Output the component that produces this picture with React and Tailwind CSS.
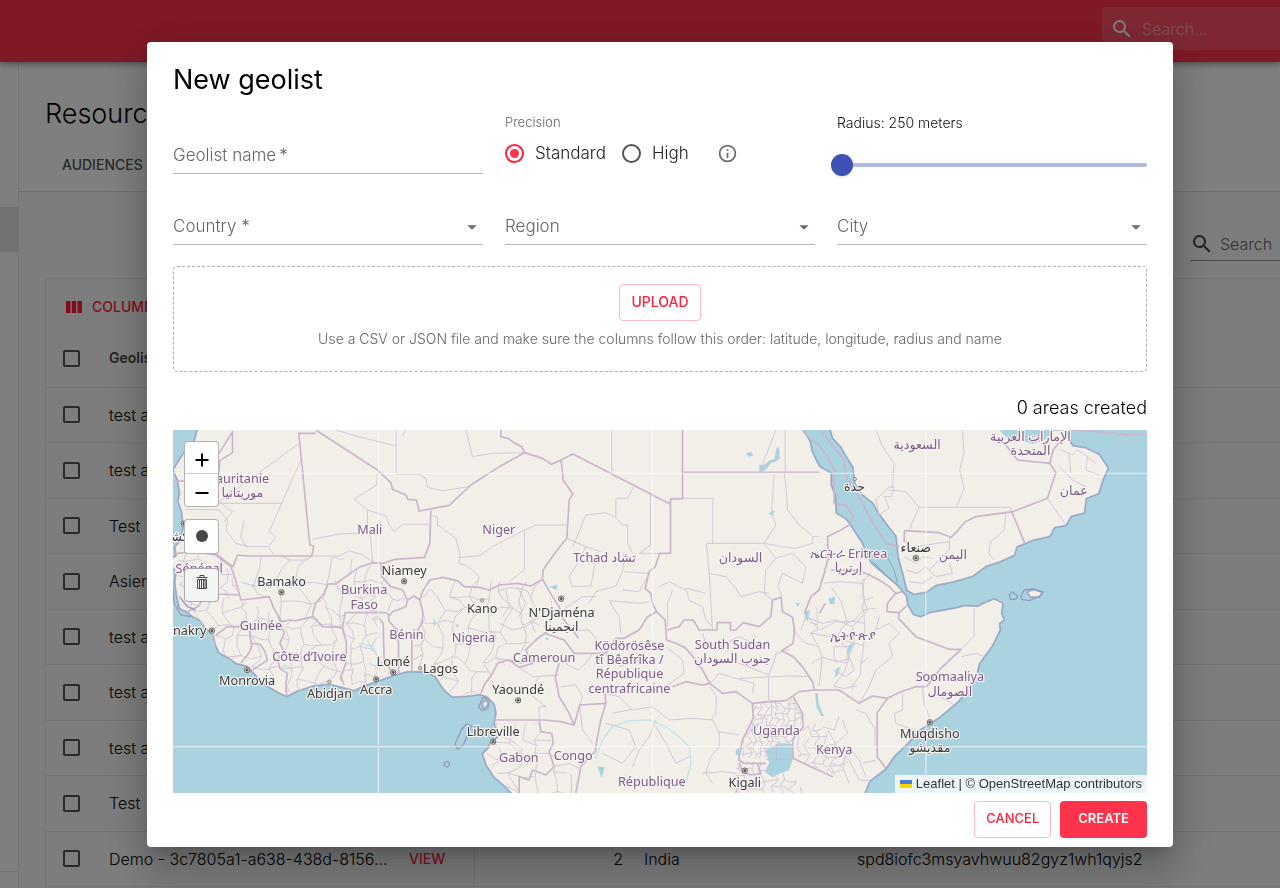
import React, { useState } from "react";

const ROWS = [
  { name: "test area" },
  { name: "test area" },
  { name: "Test" },
  { name: "Asier" },
  { name: "test area" },
  { name: "test area" },
  { name: "test area" },
  { name: "Test" },
  {
    name: "Demo - 3c7805a1-a638-438d-8156...",
    view: true,
    areas: 2,
    country: "India",
    hash: "spd8iofc3msyavhwuu82gyz1wh1qyjs2",
  },
];

// Map geometry, in tile units (3 per screen pixel)
const LAND = [
  // Africa
  "M78 -20L75 0L66 35L40 62L20 92L3 120L16 150L22 190L18 215L28 245L34 290L26 330L8 352L12 378L0 385V410L12 425L8 460L14 500L22 535L45 545L60 558L85 572L98 592L122 612L128 640L140 668L170 684L192 700L225 708L255 740L280 765L320 788L343 798L372 783L420 767L470 761L505 770L545 781L575 766L610 755L660 736L705 724L760 724L790 740L805 765L822 785L840 800L880 798L922 793L945 800L966 822L972 850L966 880L983 918L955 938L948 955L931 972L942 1005L965 1040L995 1066L1018 1089L1030 1110H2066L2076 1089L2092 1052L2140 1015L2165 978L2205 940L2240 900L2300 862L2352 818L2388 780L2412 735L2420 700L2460 645L2482 600L2480 580L2494 570L2486 550L2490 520L2465 508L2440 518L2415 530L2378 528L2345 536L2310 542L2270 550L2245 562L2222 555L2205 525L2200 498L2175 468L2130 430L2095 400L2080 370L2068 340L2036 290L2020 268L1990 250L1988 200L1975 165L1975 130L1940 110L1918 65L1912 35L1890 0L1885 -20Z",
  // Arabia
  "M1970 -20L1974 0L1982 25L2006 50L2020 75L2042 110L2048 160L2072 195L2102 218L2120 250L2150 290L2172 318L2178 380L2192 430L2204 480L2225 492L2262 485L2290 465L2340 455L2400 438L2440 408L2480 395L2525 375L2532 350L2580 330L2632 318L2645 292L2680 285L2695 258L2735 248L2740 205L2778 190L2790 150L2806 115L2780 75L2740 55L2700 48L2684 20L2680 0V-20Z",
  // Socotra, Bioko
  "M2566 486L2586 480L2608 488L2600 500L2574 500Z",
  "M930 820L942 812L946 822L934 835Z",
];

const WATER = [
  "M2480 0L2500 20L2510 40L2545 30L2580 42L2620 28L2646 0Z",
  "M1780 960L1820 940L1860 942L1862 985L1850 1020L1822 1030L1800 1042L1776 1025L1790 1000Z",
  "M1928 790L1936 790L1938 820L1950 850L1956 858L1946 858L1932 830Z",
  "M1735 900L1762 875L1750 900L1740 912Z",
  "M1720 70L1738 66L1742 76L1728 80Z",
  "M1760 104L1774 106L1790 92L1806 86L1812 55L1820 52L1822 85L1808 96L1796 98L1782 116L1762 132Z",
  "M1690 960L1702 952L1698 975L1690 975Z",
  "M1275 1010L1296 1012L1288 1045L1282 1030Z",
  "M1895 545L1912 540L1905 575L1898 565Z",
  "M1870 518L1882 520L1876 532Z",
  "M1968 505L1988 500L1985 522L1972 522Z",
  "M1992 715L2004 712L1994 738L1986 742Z",
  "M2030 645L2044 640L2038 652L2028 672L2022 668Z",
  "M1130 470L1155 464L1152 480Z",
  "M1788 250L1808 240L1800 256Z",
  "M1118 620L1130 628L1122 632Z",
  "M236 465L244 462L242 476Z",
  "M784 560L790 580L784 590Z",
  "M848 585L858 582L856 595Z",
];

const RIVERS = [
  "M1269 985L1290 930L1320 890L1370 872L1430 870L1480 890L1520 920L1550 950L1556 1000L1540 1060",
  "M560 640L600 650L622 690L608 720",
  "M585 632L605 665M590 700L618 712",
  "M330 705L352 712",
];

const BORDERS = [
  "M0 153H35M140 70L180 5V68L142 92L137 160",
  "M430 0L615 120L655 158L660 178L700 195L706 208L732 210L740 243L830 226L895 165L981 110L1056 68L1048 50L1025 38L1006 25L985 20V0",
  "M430 10H379L412 345L424 348L418 378H225L195 375L182 410L160 395L130 370",
  "M775 240L772 340L756 382L668 388L632 400L600 398L560 412L520 440L490 462H466L455 490L430 520L422 545",
  "M0 372L60 365L130 375L175 410L188 445L200 490L205 510L250 505L290 500L302 530L318 560L330 575L350 570L370 572L400 565L420 560L422 545",
  "M35 480L90 470L135 492L200 495",
  "M45 545L75 530L100 500L98 470",
  "M130 615L165 590L200 590L232 600L235 640L262 642L275 660L285 690L270 700L240 720",
  "M205 700L232 665L240 640",
  "M318 560L335 610L322 640L335 665L315 690L322 715L345 730L340 760L343 798",
  "M422 560L450 590L510 592L522 640L520 700L505 740L515 765",
  "M510 592L518 548H640L650 555",
  "M625 400L628 440L655 470L690 480L705 510L700 530L660 545L648 560L650 575L675 600L678 640V730",
  "M615 560L632 580L635 690L655 720",
  "M705 510L725 498L742 510L752 550L748 580L718 630V722",
  "M742 510L750 485L772 450L810 442L855 452L875 470L920 472L950 480L981 465L1035 460L1075 468L1110 448L1112 420L1150 365L1183 325L1190 210L1201 192L1172 150L1166 90L1137 103L1110 85L1056 68",
  "M1166 90L1201 72L1493 222",
  "M1530 0V207H1494V370H1462L1448 410L1430 425L1418 475L1435 490L1440 520L1452 545",
  "M1530 127H1941",
  "M925 790L935 765L960 730L975 700L1005 690L1050 700",
  "M1110 448L1140 500L1160 530L1170 565L1200 600L1218 625",
  "M1130 600L1090 630L1060 660L1080 700L1040 712L1010 690",
  "M1115 610L1175 630L1205 670H1300L1330 625H1355L1400 600L1425 560L1452 545L1478 570L1482 630L1510 640L1540 655L1570 690L1590 720L1612 760",
  "M1482 600L1520 590L1535 570H1562L1580 600L1634 600V578H1674V600H1690L1712 578L1760 590L1795 560L1800 510L1826 502L1830 545L1860 562L1866 600L1862 640L1828 662L1862 680L1890 710L1920 755L1926 780",
  "M1160 700L1148 740L1160 800L1190 850L1205 885L1222 825L1300 820",
  "M966 870H1115L1165 875L1205 885",
  "M1298 790L1300 820L1285 870L1275 920L1268 965L1225 1010L1210 1089",
  "M1100 870L1105 905L1138 910L1142 940L1130 965L1145 1010L1120 1035L1080 1020L1070 1050L1040 1040V1089",
  "M1500 770L1540 755L1590 765L1612 760L1650 790L1690 785L1740 820L1790 815L1840 812L1880 785L1926 780H2000L2060 820L2100 798L2145 805L2185 785L2230 770H2262",
  "M1862 800L1890 850L1892 890L1860 930L1862 985L1925 1015L1981 1040",
  "M1740 820L1742 865L1710 930L1698 990L1715 1000H1780",
  "M1700 1000L1710 1025L1735 1035L1765 1030L1755 1000M1700 1040L1690 1089",
  "M1941 0L1980 45L2015 90L2022 145L2060 200L2090 260L2140 340L2180 350",
  "M1890 0L1905 20L1935 40L1965 80L1985 120L1985 220L2020 225L2042 260L2030 285",
  "M1941 550L1958 520M1896 550L1915 500L1940 480L1955 430L1968 380L1965 320L2005 300L2030 285",
  "M1975 420H2040L2080 430L2120 450L2150 470L2170 490L2190 485",
  "M2170 490L2145 520L2143 545L2180 548L2205 525M2180 548L2178 565L2230 620L2330 658H2366",
  "M2366 658L2305 715L2262 770",
  "M2145 805L2114 848V980L2140 1015",
  "M2195 335L2196 302L2300 308L2335 322L2350 308L2378 275L2410 260L2520 245L2625 205L2650 128L2632 100L2535 90L2500 45",
  "M2517 243L2556 338M2632 100L2642 60L2665 30",
  "M2640 0L2725 0L2865 14H2925",
];

const DISTRICTS = [
  "M380 40L140 215L180 245L155 275M385 90L290 305L310 320L290 350M40 238L140 240L165 270L160 300L190 340L230 350",
  "M140 220H325M215 272L205 320L220 350L285 350L305 375M35 300L80 320L120 350",
  "M490 0L540 15L670 48M671 0V132H735L760 145L765 172L810 182L890 170",
  "M615 130L612 165L545 208L585 240L640 258L648 280L665 305L690 283H770",
  "M418 328L500 312L590 308L595 330L600 395M585 240V308M424 378H500L530 362L570 375L600 395",
  "M780 258L795 262V285L850 325L862 370L860 400L888 410L920 440L910 470M862 382L920 378L960 350L1056 300V420L1010 455",
  "M690 18L700 0M880 0L900 80L960 70L1056 68M1056 300L1090 285H1183",
  "M1318 0V128M1385 168L1365 205H1330V262M1201 350L1240 255L1300 248L1330 262L1350 285H1366V340L1380 368M1434 190V345L1400 370H1494",
  "M1183 325L1240 350L1285 365M1240 350L1215 400L1190 440L1200 470L1255 468L1270 390M1352 370V420L1330 468L1270 485L1250 520",
  "M1350 480L1400 485L1430 430L1355 425M1310 512L1400 520L1430 515M1310 512L1340 560L1345 610",
  "M1494 205H1621V340M1838 0V127M1810 0L1760 130M1805 130L1797 250L1810 285L1775 340H1602L1610 430L1620 600",
  "M1835 130L1840 165L1845 240L1880 285L1922 320L1920 340L1870 355L1830 350L1775 340M1922 320H1941",
  "M1610 430L1660 440L1690 475L1705 500L1760 485L1790 490M1460 470L1490 455L1540 480L1545 475L1600 490M1540 475L1550 510L1590 530L1600 570L1620 590M1500 480L1485 520V590",
  "M1775 340L1810 385L1780 420L1775 490L1800 510M1810 385L1860 370L1900 410L1890 460L1830 430L1815 470L1830 502",
  "M1590 610L1600 640L1640 650L1700 620L1740 640M1650 690L1700 700L1790 735L1812 670L1850 660M1700 745L1850 738L1915 740M1788 740V810",
  "M1612 760L1640 730L1690 745L1745 760L1740 790M1860 600L1900 640L1941 650M1895 550L1941 600L1990 575H2050L2075 580",
  "M1300 790L1340 800L1380 840L1440 830L1490 870L1560 865L1620 870M1340 710L1400 690M1480 650L1530 690L1535 730L1480 770",
  "M1320 850L1380 838M1300 880L1370 900L1390 950L1350 1000L1290 970M1450 870L1430 920L1400 960L1380 1010M1450 890L1480 940L1510 1000L1550 980",
  "M1612 770L1632 800L1630 850L1618 865L1640 910L1640 950L1615 980L1600 1030L1620 1060M1640 905L1700 915M1590 1030L1650 1025L1690 1030",
  "M1178 700L1215 720L1240 700L1260 670M1165 770L1210 765L1230 800L1222 825M1205 600L1250 600L1280 640M1200 560L1170 540L1230 500H1270",
  "M981 580L1020 600L1060 590L1100 560M1000 480L1010 530L990 560M1035 470L1060 520L1040 560M1040 712L1080 740L1160 735M1100 740L1070 790L1120 830H1100V870",
  "M990 920L1030 940L1050 960L1020 990L985 985M1060 880L1050 930L1100 950M1222 830L1230 900L1260 940M1145 1010L1190 1000L1220 1015",
  "M2150 170L2110 210L2120 255L2150 235L2135 200H2155L2165 172ZM2150 180L2200 185L2240 232L2220 275L2210 300",
  "M2110 0L2130 50L2165 100L2160 172M2370 0L2374 70L2362 120L2368 150L2375 175L2350 235M2240 232H2515V245",
  "M2625 205L2680 285M2500 250L2495 300L2455 335L2448 370L2465 390M2332 320L2330 360L2290 400L2270 420",
  "M2665 60L2700 75L2715 60L2745 80L2740 120L2780 135M2695 130L2690 75M2745 80L2770 100M2660 110L2700 150L2740 170",
  "M2195 335L2220 355L2260 345L2330 335M2195 380L2230 400L2250 380L2280 385M2200 420L2235 430L2260 410L2290 440L2340 430L2330 400M2210 455L2250 460L2280 440",
  "M2405 535V610L2408 615L2366 658M2366 680L2412 670L2435 680M2305 800L2345 825M2250 770L2255 820L2270 860M2190 790V840L2165 850L2170 880L2240 905",
  "M2095 430L2075 450L2070 500L2085 540L2040 590L1990 570L1950 580L1900 560L1885 600M2040 590L2045 640L2030 680L2045 720L2020 740L1980 720",
  "M2110 600L2150 580L2180 610L2150 640L2160 680L2110 720L2090 770L2060 820M2120 560L2110 600M2070 460L2000 455L1955 460",
  "M1985 650L2030 650L2020 700L1985 690ZM2050 840L2080 850L2108 900V950M2000 860L1985 900L1950 890M1985 960L2030 990L2060 1050L2092 1052",
  "M1965 900L1990 940L2025 910L2010 870M2030 950L2060 990L2080 1040M1975 1000L2010 1010L2030 1060M2110 990L2070 1000",
];

// Regions that are split in many small units: clip outline, cell step and jitter seed
const MESHES = [
  { id: "uganda", clip: "M1740 820L1790 815L1862 805L1892 860L1860 940L1850 985H1710L1712 930L1745 865Z", box: [1700, 800, 1900, 1000], step: 17, seed: 3 },
  { id: "kenya", clip: "M1862 900L1930 880L1990 940L2030 990L2000 1040L1900 1000L1862 960Z", box: [1860, 870, 2040, 1050], step: 26, seed: 9 },
  { id: "rwanda", clip: "M1690 985L1770 1000L1860 1040L1900 1089H1690Z", box: [1680, 980, 1910, 1089], step: 32, seed: 5 },
  { id: "mali", clip: "M205 380L480 380L600 398L470 465L422 560L318 570L290 500H205Z", box: [200, 380, 610, 580], step: 72, seed: 21 },
  { id: "guinea", clip: "M45 545L100 500L205 510L318 560L335 610L322 700L343 790L225 705L140 668Z", box: [40, 490, 350, 800], step: 44, seed: 13 },
  { id: "ivory", clip: "M340 575L420 560L510 592L520 700L505 765L343 790L322 690Z", box: [320, 550, 530, 800], step: 42, seed: 17 },
  { id: "ghana", clip: "M518 548H615L635 690L655 730L545 775L510 740Z", box: [510, 540, 660, 790], step: 38, seed: 31 },
  { id: "burkina", clip: "M430 540L466 465L560 412L625 400L700 510L640 548H518L510 592L450 590Z", box: [420, 400, 710, 600], step: 48, seed: 41 },
  { id: "nigeria", clip: "M725 600L752 550L750 485L855 452L1110 455L1140 520L1060 660L960 730L925 790L840 795L780 730L720 720Z", box: [710, 440, 1150, 800], step: 50, seed: 8 },
  { id: "senegal", clip: "M20 340L130 370L188 445L200 495L50 540L15 500Z", box: [10, 330, 210, 550], step: 48, seed: 27 },
  { id: "gabon", clip: "M960 880H1100L1140 940L1145 1010L1210 1040V1089H1020L940 990Z", box: [940, 870, 1220, 1089], step: 54, seed: 45 },
  { id: "ethiopia", clip: "M1900 600L1960 480L2090 440L2120 600L2050 780L1930 770Z", box: [1890, 430, 2130, 790], step: 66, seed: 52 },
];

const meshPath = ([x0, y0, x1, y1], step, seed) => {
  let s = seed * 7919;
  const rand = () => {
    s = (s * 16807) % 2147483647;
    return s / 2147483647 - 0.5;
  };
  const cols = Math.ceil((x1 - x0) / step) + 1;
  const rows = Math.ceil((y1 - y0) / step) + 1;
  const pts = [];
  for (let r = 0; r <= rows; r++) {
    for (let c = 0; c <= cols; c++) {
      const shift = r % 2 ? step / 2 : 0;
      pts.push([x0 + c * step - shift + rand() * step * 0.7, y0 + r * step + rand() * step * 0.7]);
    }
  }
  const line = (a, b) => {
    const mx = Math.round((a[0] + b[0]) / 2 + rand() * step * 0.4);
    const my = Math.round((a[1] + b[1]) / 2 + rand() * step * 0.4);
    return `M${Math.round(a[0])} ${Math.round(a[1])}L${mx} ${my}L${Math.round(b[0])} ${Math.round(b[1])}`;
  };
  let d = "";
  for (let r = 0; r < rows; r++) {
    for (let c = 0; c < cols; c++) {
      const i = r * (cols + 1) + c;
      d += line(pts[i], pts[i + cols + 1]);
      if ((r + c) % 3) d += line(pts[i], pts[i + 1]);
    }
  }
  return d;
};

// [x, y of the first line, lines]
const COUNTRIES = [
  [210, 158, ["auritanie", "موريتانيا"]],
  [592, 312, ["Mali"]],
  [80, 430, ["Sénégal"]],
  [575, 493, ["Burkina", "Faso"]],
  [265, 601, ["Guinée"]],
  [702, 627, ["Bénin"]],
  [903, 637, ["Nigeria"]],
  [411, 693, ["Côte d’Ivoire"]],
  [979, 312, ["Niger"]],
  [1296, 396, ["Tchad تشاد"]],
  [1704, 396, ["السودان"]],
  [1115, 697, ["Cameroun"]],
  [1371, 659, ["Ködörösêse", "tî Bêafrîka /", "République", "centrafricaine"]],
  [1680, 656, ["South Sudan", "جنوب السودان"]],
  [1812, 915, ["Uganda"]],
  [1039, 997, ["Gabon"]],
  [1202, 991, ["Congo"]],
  [1438, 1069, ["République"]],
  [2028, 384, ["ኤርትራ Eritrea", "إرتريا"]],
  [2041, 630, ["ኢትዮጵያ"]],
  [1985, 971, ["Kenya"]],
  [2332, 754, ["Soomaaliya", "الصومال"]],
  [2234, 56, ["السعودية"]],
  [2574, 33, ["الإمارات العربية", "المتحدة"]],
  [2704, 194, ["عمان"]],
  [2341, 388, ["اليمن"]],
];

// [label x, label y, lines, marker x, marker y, capital]
const CITIES = [
  [327, 467, ["Bamako"], 327, 487, true],
  [695, 434, ["Niamey"], 695, 454, true],
  [929, 548, ["Kano"], 929, 511, false],
  [40, 616, ["onakry"], 118, 602, true],
  [224, 764, ["Monrovia"], 224, 720, true],
  [471, 804, ["Abidjan"], 471, 756, false],
  [611, 793, ["Accra"], 611, 748, true],
  [662, 708, ["Lomé"], 662, 727, true],
  [804, 728, ["Lagos"], 743, 714, false],
  [1037, 791, ["Yaoundé"], 1037, 811, true],
  [962, 918, ["Libreville"], 962, 935, true],
  [1167, 560, ["N'Djaména", "انجمينا"], 1166, 506, true],
  [1717, 1070, ["Kigali"], 1717, 1022, true],
  [2046, 182, ["جدة"], 2047, 147, false],
  [2230, 366, ["صنعاء"], 2230, 384, true],
  [2272, 924, ["Muqdisho", "مقديشو"], 2272, 877, true],
  [15, 332, ["نواكشوط"], 34, 281, true],
];

const MapLabel = ({ x, y, lines, fill }) => (
  <text y={y} fill={fill} stroke="#f7f4f4" strokeWidth="7" textAnchor="middle" className="[paint-order:stroke]">
    {lines.map((line, i) => (
      <tspan key={line} x={x} dy={i ? 43 : 0}>
        {line}
      </tspan>
    ))}
  </text>
);

const AfricaMap = () => (
  <svg
    viewBox="0 0 2925 1089"
    preserveAspectRatio="xMidYMid slice"
    className="block h-full w-full bg-[#aad3df] font-['Noto_Sans','DejaVu_Sans',sans-serif]"
    strokeLinejoin="round"
    role="img"
    aria-label="Map"
  >
    <defs>
      {MESHES.map((mesh) => (
        <clipPath key={mesh.id} id={mesh.id}>
          <path d={mesh.clip} />
        </clipPath>
      ))}
    </defs>
    <g fill="#f2efe9">
      {LAND.map((d) => (
        <path key={d} d={d} stroke="#93a9c8" strokeWidth="8" />
      ))}
      {LAND.map((d) => (
        <path key={d} d={d} stroke="#a3a0c4" strokeWidth="2" />
      ))}
    </g>
    <g fill="none" stroke="#d3c8d9" strokeWidth="3">
      {DISTRICTS.map((d) => (
        <path key={d} d={d} />
      ))}
      {MESHES.map((mesh) => (
        <path key={mesh.id} d={meshPath(mesh.box, mesh.step, mesh.seed)} clipPath={`url(#${mesh.id})`} />
      ))}
    </g>
    <g fill="#aad3df">
      {WATER.map((d) => (
        <path key={d} d={d} />
      ))}
    </g>
    <g fill="none" stroke="#c3e2ea" strokeWidth="4">
      {RIVERS.map((d) => (
        <path key={d} d={d} />
      ))}
    </g>
    <g fill="none" stroke="#cbb5cc" strokeWidth="5">
      {BORDERS.map((d) => (
        <path key={d} d={d} />
      ))}
      <path d="M1780 988H1860M1812 940V988" strokeWidth="2" />
    </g>
    <g fill="none" stroke="#929cc0" strokeWidth="4">
      <path d="M882 882L898 888L872 945L856 958L848 942L866 900Z" />
      <path d="M932 802L950 808L946 835L930 842L918 832Z" />
      <circle cx="823" cy="1003" r="8" />
      <path d="M2510 495L2520 486L2536 498L2530 508L2514 508ZM2545 500L2555 480L2580 477L2612 486L2600 500L2570 512L2548 508Z" />
      <path d="M0 455L5 520L25 555L55 560M20 500L45 530L70 540" />
      <path d="M2140 375L2165 420L2175 460M2100 395L2145 440L2180 470" strokeWidth="3" />
    </g>
    <g stroke="#ffffff" strokeOpacity="0.55" strokeWidth="4">
      <path d="M0 130H2925M0 950H2925M618 0V1089M1440 0V1089M2260 0V1089" />
    </g>
    <g fontSize="38">
      {CITIES.map(([x, y, lines, mx, my, capital]) => (
        <g key={lines[0]}>
          <circle cx={mx} cy={my} r={capital ? 8 : 5} fill="#d9d6cc" stroke={capital ? "#66665e" : "#8f8f88"} strokeWidth="3" />
          {capital && <circle cx={mx} cy={my} r="4" fill="#55554d" />}
          <MapLabel x={x} y={y} lines={lines} fill="#383838" />
        </g>
      ))}
      {COUNTRIES.map(([x, y, lines]) => (
        <MapLabel key={`${x}-${y}`} x={x} y={y} lines={lines} fill="#7d5b86" />
      ))}
    </g>
  </svg>
);

const SearchIcon = ({ className }) => (
  <svg viewBox="0 0 24 24" fill="currentColor" className={className} aria-hidden="true">
    <path d="M15.5 14h-.79l-.28-.27A6.47 6.47 0 0 0 16 9.5 6.5 6.5 0 1 0 9.5 16c1.61 0 3.09-.59 4.23-1.57l.27.28v.79l5 4.99L20.49 19l-4.99-5zm-6 0C7.01 14 5 11.99 5 9.5S7.01 5 9.5 5 14 7.01 14 9.5 11.99 14 9.5 14z" />
  </svg>
);

const SelectField = ({ label, required }) => (
  <div className="relative h-[35px] border-b border-[#949494]/70">
    <select
      aria-label={label}
      required={required}
      className="h-full w-full appearance-none bg-transparent text-[17px] font-light text-[#666] outline-none"
    >
      <option>{required ? `${label} *` : label}</option>
    </select>
    <svg viewBox="0 0 24 24" className="pointer-events-none absolute right-0 top-1.5 size-[22px] fill-[#6b6b6b]">
      <path d="M7 10l5 5 5-5z" />
    </svg>
  </div>
);

const PrecisionRadio = ({ label, checked, onChange }) => (
  <label className="flex items-center gap-[11px] text-[17px] font-light text-[#222]">
    <input
      type="radio"
      name="precision"
      checked={checked}
      onChange={onChange}
      className="size-[19px] appearance-none rounded-full border-2 border-[#555] bg-clip-content p-[3px] checked:border-[#ff1f3a] checked:bg-[#ff334c]"
    />
    {label}
  </label>
);

const Page = () => (
  <div className="flex h-screen flex-col overflow-hidden bg-white">
    <header className="z-10 flex h-[62px] shrink-0 justify-end bg-[#ff334c] shadow-[0_2px_4px_-1px_rgba(0,0,0,0.2),0_4px_5px_rgba(0,0,0,0.14),0_1px_10px_rgba(0,0,0,0.12)]">
      <div className="mt-[7px] flex h-[43px] w-[178px] items-center gap-2 rounded-l bg-white/15 pl-2">
        <SearchIcon className="size-6 shrink-0 text-white" />
        <input aria-label="Search" placeholder="Search..." className="w-full min-w-0 bg-transparent text-base font-light outline-none placeholder:text-white/45" />
      </div>
    </header>
    <div className="flex min-h-0 flex-1">
      <aside className="flex w-[19px] shrink-0 flex-col border-r border-[#e8e8e8] pt-[145px]">
        <div className="h-[45px] bg-[#e6e6e6]" />
        <div className="mt-auto mb-4 border-t border-[#e8e8e8]" />
      </aside>
      <main className="min-w-0 flex-1 bg-[#fbfbfb]">
        <div className="border-b border-[#dedede] bg-white pl-[26px]">
          <h1 className="pt-9 text-[27px] leading-8 font-light text-black">Resources</h1>
          <nav className="mt-2 flex h-[53px]">
            <button className="px-[17px] text-sm font-medium text-[#555]">AUDIENCES</button>
          </nav>
        </div>
        <div className="flex justify-end pt-[35px]">
          <div className="flex h-[34px] w-[90px] items-center gap-1.5 border-b border-[#999]">
            <SearchIcon className="size-6 shrink-0 text-[#444]" />
            <input aria-label="Search geolists" placeholder="Search" className="w-full min-w-0 bg-transparent text-base font-light outline-none placeholder:text-[#666]" />
          </div>
        </div>
        <section className="mt-[17px] ml-[26px] rounded-tl border-t border-l border-[#e8e8e8]">
          <button className="flex h-[51px] items-center gap-2.5 pt-1 pl-5 text-sm font-medium text-[#ff1f3a]">
            <svg viewBox="0 0 16 12" className="h-3 w-4 fill-[#ff1f3a]">
              <path d="M0 0H4.5V12H0ZM5.8 0H10.2V12H5.8ZM11.5 0H16V12H11.5Z" />
            </svg>
            COLUMNS
          </button>
          <table className="h-[557px] w-full table-fixed border-collapse text-base font-light text-black">
            <colgroup>
              <col className="w-[53px]" />
              <col className="w-[300px]" />
              <col className="w-[75px]" />
              <col className="w-[160px]" />
              <col className="w-[213px]" />
              <col />
            </colgroup>
            <thead>
              <tr className="h-[57px] border-b border-[#e8e8e8] text-left">
                <th className="pl-[17px]">
                  <input type="checkbox" aria-label="Select all" className="block size-[17px] appearance-none rounded-xs border-2 border-[#555]" />
                </th>
                <th className="pl-2.5 text-sm font-semibold text-[#444]">Geolist name</th>
                <th colSpan={4} />
              </tr>
            </thead>
            <tbody>
              {ROWS.map((row, i) => (
                <tr key={i} className="border-b border-[#e8e8e8]">
                  <td className="pl-[17px]">
                    <input type="checkbox" aria-label={row.name} className="block size-[17px] appearance-none rounded-xs border-2 border-[#555]" />
                  </td>
                  <td className="pl-2.5 whitespace-nowrap">{row.name}</td>
                  <td className="border-r border-[#e8e8e8] pl-2.5 text-sm font-medium text-[#ff1f3a]">
                    {row.view && <button>VIEW</button>}
                  </td>
                  <td className="pr-[11px] text-right">{row.areas}</td>
                  <td className="pl-2.5">{row.country}</td>
                  <td className="pl-2.5">{row.hash}</td>
                </tr>
              ))}
            </tbody>
          </table>
        </section>
      </main>
    </div>
  </div>
);

const GeolistDialog = () => {
  const [precision, setPrecision] = useState("standard");
  const [radius, setRadius] = useState(250);

  return (
    <div
      role="dialog"
      aria-labelledby="dialog-title"
      className="w-full max-w-[1026px] rounded bg-white px-[26px] pt-[22px] pb-[9px] shadow-[0_11px_15px_-7px_rgba(0,0,0,0.2),0_24px_38px_3px_rgba(0,0,0,0.14),0_9px_46px_8px_rgba(0,0,0,0.12)]"
    >
      <h2 id="dialog-title" className="text-[27px] leading-8 text-black">
        New geolist
      </h2>

      <form className="mt-[17px] grid grid-cols-3 gap-x-[22px] gap-y-9">
        <input
          aria-label="Geolist name"
          required
          placeholder={"Geolist name\u2009*"}
          className="h-[61px] border-b border-[#949494]/70 pt-[25px] text-[17px] font-light outline-none placeholder:text-[#666]"
        />
        <fieldset>
          <legend className="text-[13px] leading-[18px] font-light text-[#666]">Precision</legend>
          <div className="mt-2.5 flex items-center gap-4">
            <PrecisionRadio label="Standard" checked={precision === "standard"} onChange={() => setPrecision("standard")} />
            <PrecisionRadio label="High" checked={precision === "high"} onChange={() => setPrecision("high")} />
            <svg viewBox="0 0 24 24" className="ml-3 size-[21px] fill-[#6b6b6b]">
              <path d="M11 7h2v2h-2zm0 4h2v6h-2zm1-9a10 10 0 1 0 0 20 10 10 0 0 0 0-20zm0 18a8 8 0 1 1 0-16 8 8 0 0 1 0 16z" />
            </svg>
          </div>
        </fieldset>
        <div>
          <label htmlFor="radius" className="block text-sm leading-5 font-light text-[#111]">
            Radius: {radius} meters
          </label>
          <input
            id="radius"
            type="range"
            min="250"
            max="10000"
            value={radius}
            onChange={(e) => setRadius(Number(e.target.value))}
            className="mt-6 -ml-1.5 block h-4 w-[calc(100%+6px)] appearance-none bg-transparent [&::-webkit-slider-runnable-track]:h-1 [&::-webkit-slider-runnable-track]:rounded-full [&::-webkit-slider-runnable-track]:bg-[#b2bae2] [&::-webkit-slider-thumb]:-mt-[9px] [&::-webkit-slider-thumb]:size-[22px] [&::-webkit-slider-thumb]:appearance-none [&::-webkit-slider-thumb]:rounded-full [&::-webkit-slider-thumb]:bg-[#3f51b5] [&::-webkit-slider-thumb]:shadow"
          />
        </div>
        <SelectField label="Country" required />
        <SelectField label="Region" />
        <SelectField label="City" />
      </form>

      <div className="mt-[21px] flex h-[106px] flex-col items-center rounded border border-dashed border-[#b0b0b0] pt-[17px]">
        <button className="h-[37px] rounded border border-[#ffb8c0] px-[11px] text-sm font-medium text-[#ff1f3a]">UPLOAD</button>
        <p className="mt-2 text-sm leading-5 font-light text-[#666]">
          Use a CSV or JSON file and make sure the columns follow this order: latitude, longitude, radius and name
        </p>
      </div>

      <p className="mt-6 text-right text-lg leading-6 font-light text-black">0 areas created</p>

      <div className="relative mt-2.5 h-[363px] overflow-hidden">
        <AfricaMap />
        <div className="absolute top-[11px] left-[11px] w-[35px]">
          <div className="divide-y divide-[#ccc] rounded border border-black/30 bg-white">
            <button aria-label="Zoom in" className="flex h-8 w-full items-center justify-center pt-1.5">
              <svg viewBox="0 0 14 14" className="size-3.5 stroke-black stroke-2">
                <path d="M7 0.5V13.5M0.5 7H13.5" />
              </svg>
            </button>
            <button aria-label="Zoom out" className="flex h-8 w-full items-center justify-center pt-1.5">
              <svg viewBox="0 0 14 14" className="size-3.5 stroke-black stroke-2">
                <path d="M0.5 7H13.5" />
              </svg>
            </button>
          </div>
          <button aria-label="Draw a circle" className="mt-3 flex h-[35px] w-full items-center justify-center rounded border border-black/30 bg-white">
            <span className="size-3 rounded-full bg-[#464646]" />
          </button>
          <button aria-label="Delete areas" className="mt-3.5 flex h-[34px] w-full items-center justify-center rounded border border-black/30 bg-[#f4f4f4]">
            <svg viewBox="0 0 12 16" className="mb-1.5 h-4 w-3 fill-none stroke-[#464646]">
              <path d="M0.5 3.5H11.5M4 3V1.5H8V3M1.5 5.5V14.5H10.5V5.5M1.5 5.5H10.5M3.5 6V14M5.5 6V14M7.5 6V14M9 6V14" />
            </svg>
          </button>
        </div>
        <div className="absolute right-0 bottom-0 flex h-[18px] items-center gap-1 bg-white/80 px-[5px] font-['Liberation_Sans',sans-serif] text-[13px] text-[#333]">
          <svg viewBox="0 0 12 8" className="h-2 w-3">
            <path fill="#4c7be1" d="M0 0h12v4H0z" />
            <path fill="#ffd500" d="M0 4h12v4H0z" />
          </svg>
          <span>
            <a href="#leaflet">Leaflet</a> | © <a href="#osm">OpenStreetMap contributors</a>
          </span>
        </div>
      </div>

      <div className="mt-2 flex justify-end gap-[9px] text-[13px]">
        <button className="h-[37px] rounded border border-[#ffb8c0] px-[11px] font-medium text-[#ff1f3a]">CANCEL</button>
        <button className="h-[37px] rounded bg-[#ff334c] px-[18px] font-semibold text-white">CREATE</button>
      </div>
    </div>
  );
};

const App = () => (
  <div className="relative font-['Inter','Open_Sans',sans-serif]">
    <Page />
    <div className="fixed inset-0 z-20 flex items-center justify-center bg-black/50 pl-10">
      <GeolistDialog />
    </div>
  </div>
);

export default App;
